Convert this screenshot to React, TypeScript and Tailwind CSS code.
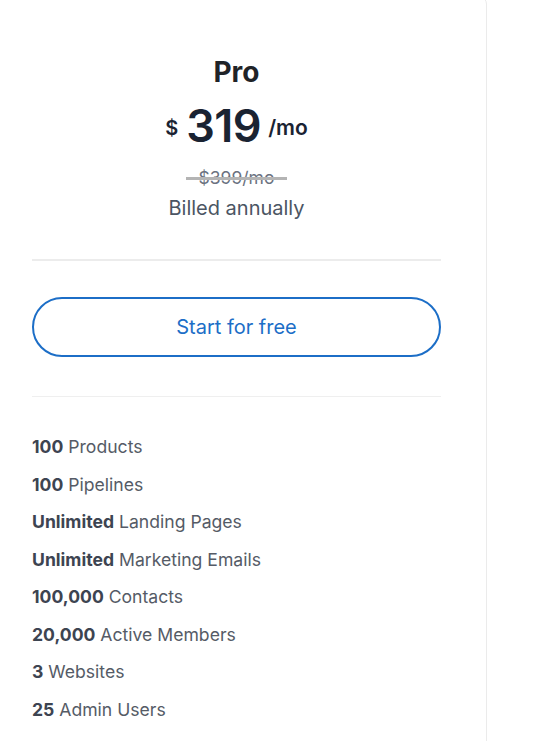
import React from "react";

const features: [string, string][] = [
  ["100", "Products"],
  ["100", "Pipelines"],
  ["Unlimited", "Landing Pages"],
  ["Unlimited", "Marketing Emails"],
  ["100,000", "Contacts"],
  ["20,000", "Active Members"],
  ["3", "Websites"],
  ["25", "Admin Users"],
];

export default function App() {
  return (
    <div className="w-[559px] h-[741px] overflow-hidden bg-white" style={{ fontFamily: "Inter, 'Noto Sans', sans-serif" }}>
      <div className="-ml-[14px] -mt-[4px] w-[501px] h-[800px] rounded-[8px] border border-[#ebebeb] bg-white px-[45px] pt-[58px]">
        <div className="flex flex-col items-center">
          <h2 className="text-[28px] leading-[34px] font-bold text-[#1f2328]">Pro</h2>
          <div className="mt-[15px] flex items-center text-[#1a2332]">
            <span className="text-[20px] font-semibold mr-[8px] mt-[4px]">$</span>
            <span className="text-[45px] leading-[44px] font-semibold tracking-[-0.5px]">319</span>
            <span className="text-[21px] font-semibold ml-[7px] mt-[4px]">/mo</span>
          </div>
          <div className="relative mt-[20px] px-[13px] text-[17.5px] leading-[20px] text-[#6b7280]">
            $399/mo
            <span className="absolute left-0 right-0 top-[9px] h-[3px] bg-[#b4b4b4]"></span>
          </div>
          <div className="mt-[7px] text-[20px] leading-[26px] text-[#4b5563]">Billed annually</div>
        </div>
        <div className="mt-[38px] h-[2px] bg-[#ececec]"></div>
        <button className="mt-[36px] h-[60px] w-full rounded-full border-2 border-[#1c6ec7] text-[20px] text-[#1c6ec7]">
          Start for free
        </button>
        <div className="mt-[39px] h-px bg-[#efefef]"></div>
        <ul className="mt-[31px] flex flex-col">
          {features.map(([b, t]) => (
            <li key={t} className="text-[17.6px] leading-[37.5px] text-[#555b66]">
              <span className="font-bold text-[#3d4451]">{b}</span> {t}
            </li>
          ))}
        </ul>
      </div>
    </div>
  );
}
